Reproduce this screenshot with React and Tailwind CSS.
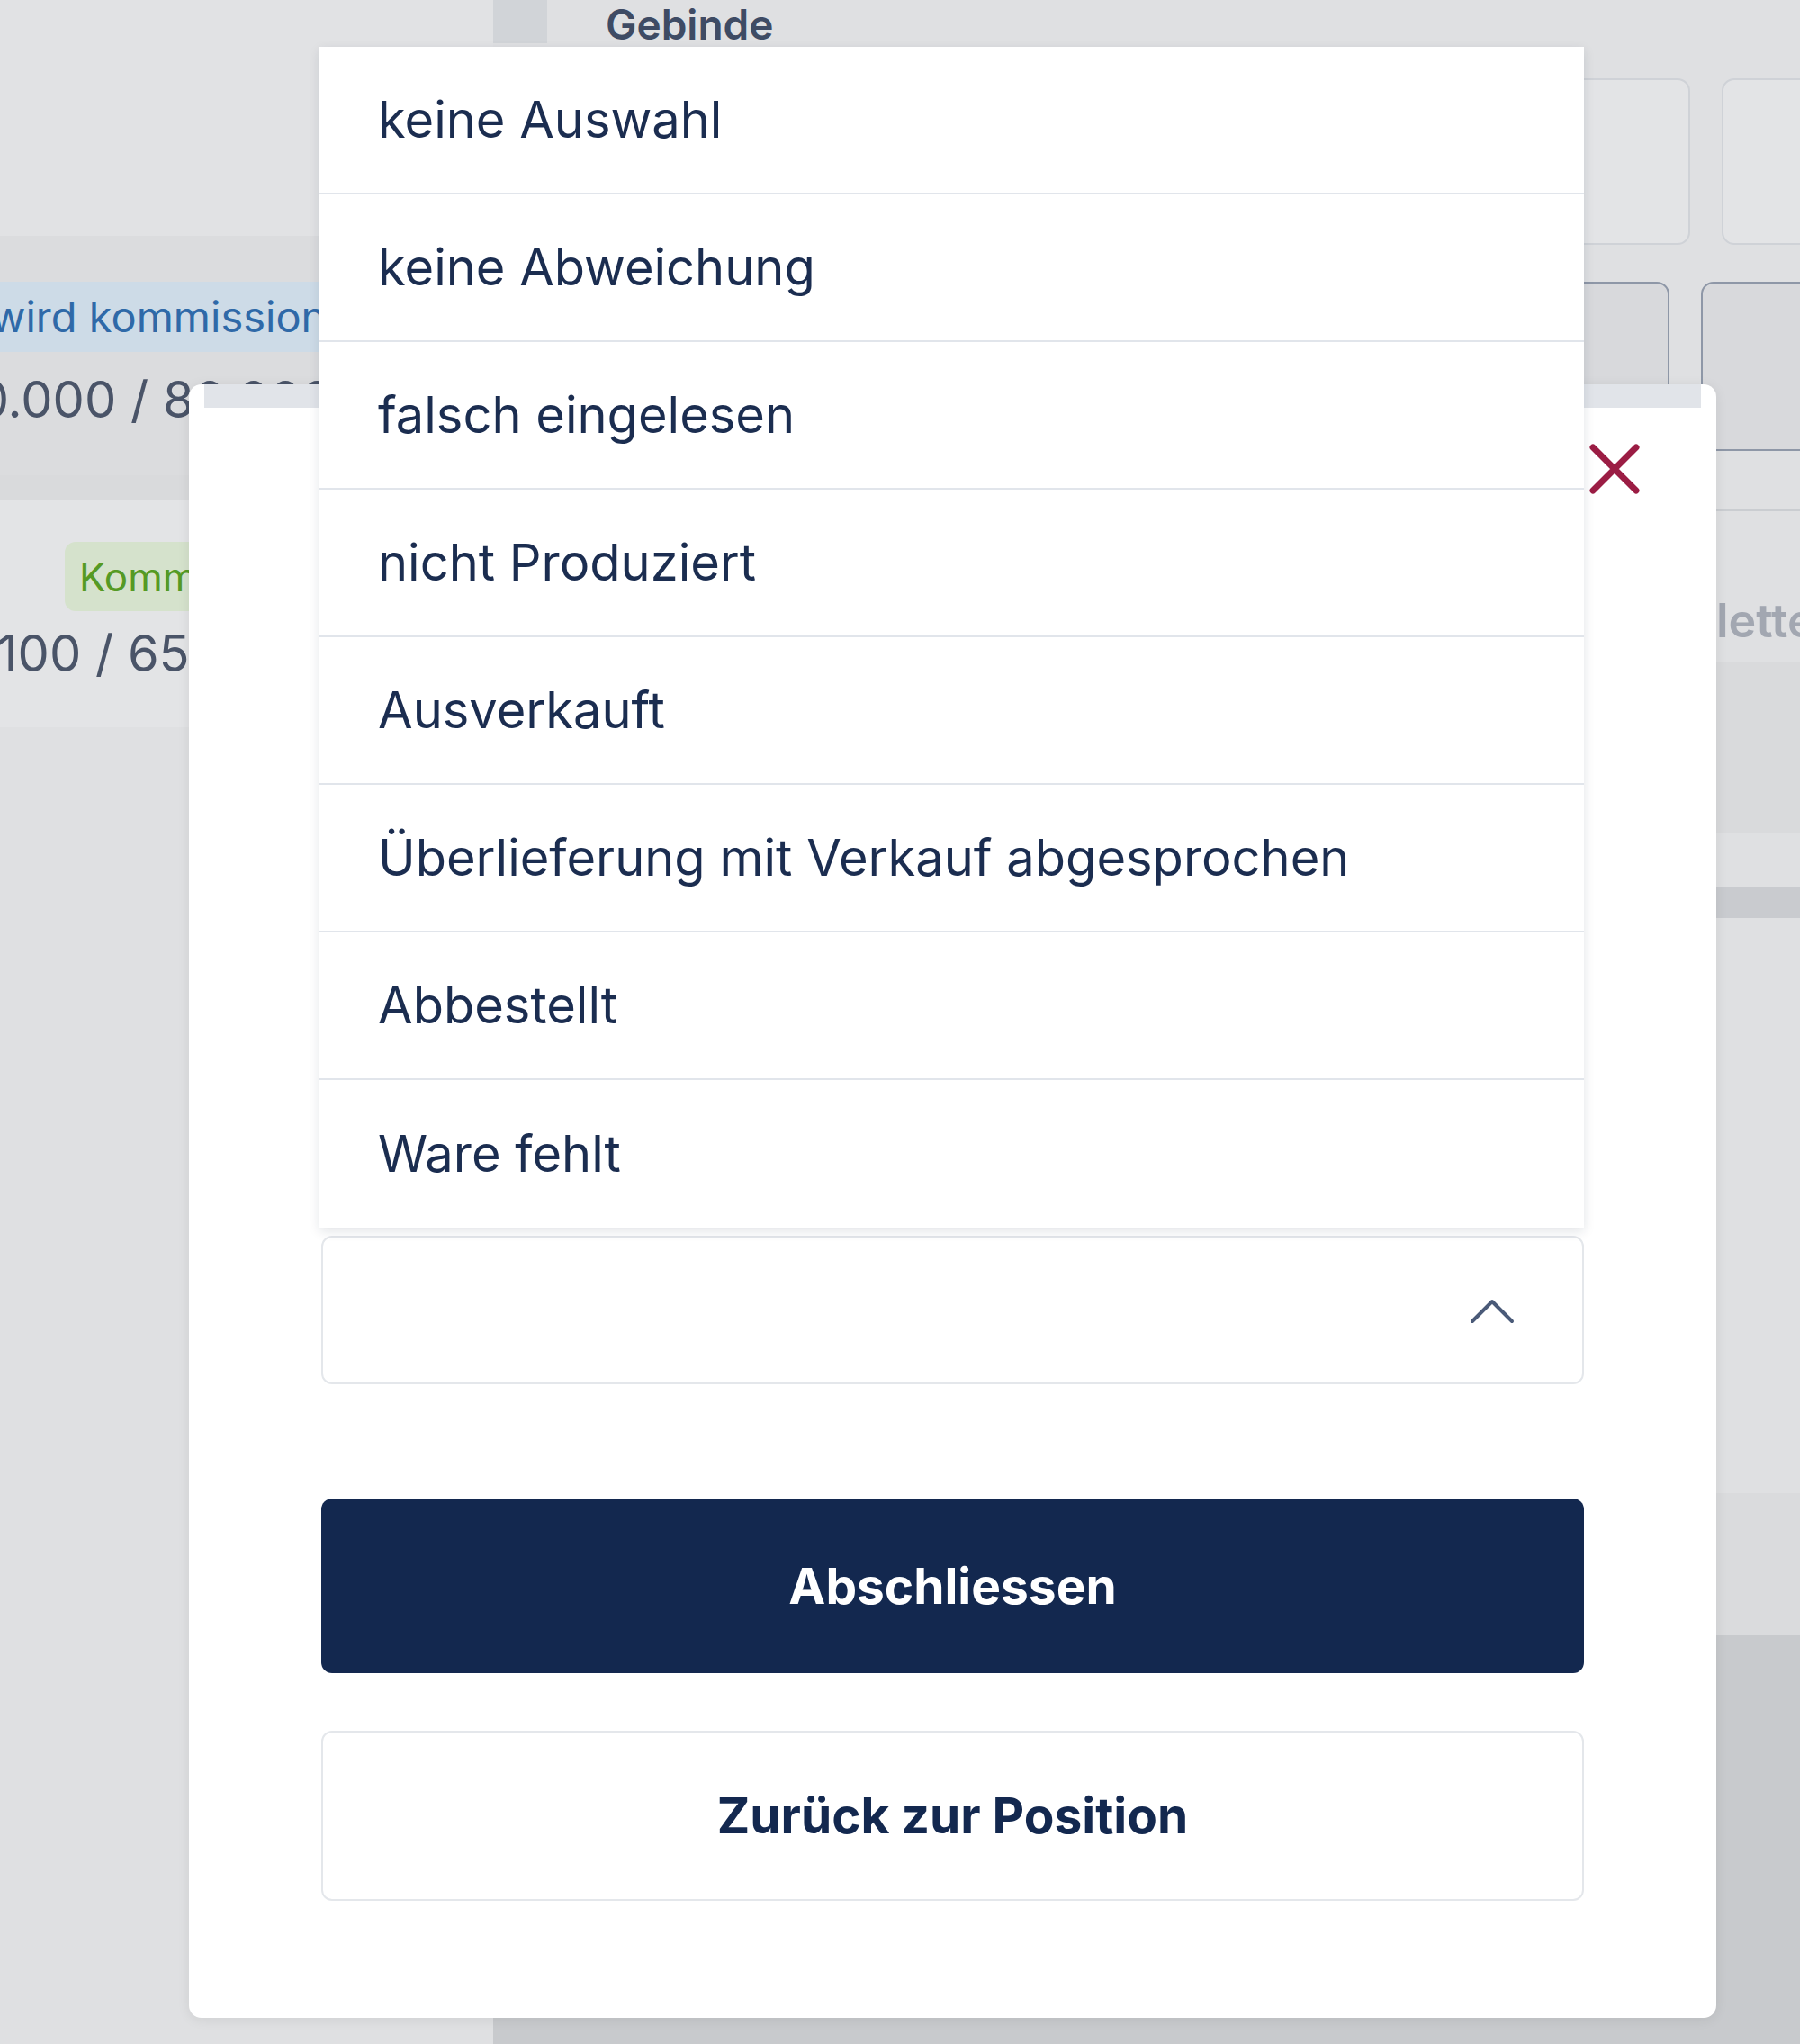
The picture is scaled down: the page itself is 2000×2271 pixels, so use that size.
import React from 'react';

const reasons = [
  'keine Auswahl',
  'keine Abweichung',
  'falsch eingelesen',
  'nicht Produziert',
  'Ausverkauft',
  'Überlieferung mit Verkauf abgesprochen',
  'Abbestellt',
  'Ware fehlt',
];

const CloseIcon = () => (
  <svg width="58" height="58" viewBox="0 0 58 58" fill="none">
    <path d="M5 5 L53 53 M53 5 L5 53" stroke="#9b1d44" strokeWidth="7" strokeLinecap="round" />
  </svg>
);

const ChevronUp = () => (
  <svg width="50" height="32" viewBox="0 0 50 32" fill="none">
    <path d="M3 28 L25 6 L47 28" stroke="#4a5a78" strokeWidth="4" strokeLinecap="round" strokeLinejoin="round" />
  </svg>
);

const App = () => {
  return (
    <div className="relative w-[2000px] h-[2271px] overflow-hidden bg-[#dfe0e2] font-['Inter',sans-serif]">
      {/* Page behind the dialog */}
      <div className="flex h-full">
        {/* Left list */}
        <div className="w-[548px] shrink-0 flex flex-col overflow-hidden">
          <div className="h-[262px] bg-[#e1e2e4]" />
          <div className="h-[266px] bg-[#dbdcde] pt-[51px]">
            <div className="h-[78px] w-[600px] -ml-[10px] bg-[#cddbe7] flex items-center text-[47px] text-[#2f69a8] whitespace-nowrap">
              wird kommissioniert
            </div>
            <div className="-ml-[60px] mt-[18px] text-[56px] leading-[70px] text-[#4a5468] whitespace-nowrap">
              80.000 / 80.000
            </div>
          </div>
          <div className="h-[27px] bg-[#d9dadc]" />
          <div className="h-[253px] bg-[#e3e4e6] pt-[47px]">
            <div className="ml-[72px] h-[77px] w-[400px] rounded-[12px] bg-[#d5e2cc] flex items-center pl-[16px] text-[44px] text-[#559a24] whitespace-nowrap">
              Kommissioniert
            </div>
            <div className="-ml-[26px] mt-[12px] text-[56px] leading-[70px] text-[#4a5468] whitespace-nowrap">
              1100 / 650
            </div>
          </div>
          <div className="flex-1 bg-[#dfe0e2]" />
        </div>

        {/* Middle + right */}
        <div className="flex-1 flex flex-col">
          <div className="h-[1817px] flex">
            <div className="w-[1212px] shrink-0">
              <div className="flex items-start">
                <div className="w-[60px] h-[48px] bg-[#d1d4d8]" />
                <div className="ml-[65px] text-[46px] leading-[54px] font-semibold text-[#3e4b64]">Gebinde</div>
              </div>
            </div>
            <div className="flex-1 overflow-hidden flex flex-col">
              <div className="pt-[87px] flex gap-[35px] -ml-[20px]">
                <div className="w-[138px] h-[185px] shrink-0 rounded-[14px] border-2 border-[#cfd2d7] bg-[#e3e4e6]" />
                <div className="w-[140px] h-[185px] shrink-0 rounded-[14px] border-2 border-[#cfd2d7] bg-[#e3e4e6]" />
              </div>
              <div className="mt-[41px] flex gap-[35px] -ml-[20px]">
                <div className="w-[115px] h-[188px] shrink-0 rounded-[14px] border-2 border-[#8e97a7] bg-[#d8d9dc]" />
                <div className="w-[160px] h-[188px] shrink-0 rounded-[14px] border-2 border-[#8e97a7] bg-[#d8d9dc]" />
              </div>
              <div className="mt-[65px] h-[2px] bg-[#cacdd1]" />
              <div className="mt-[94px] ml-[84px] text-[52px] leading-[56px] font-semibold text-[#a2a7b1] whitespace-nowrap">
                Palette
              </div>
              <div className="mt-[18px] h-[190px] bg-[#d9dadc]" />
              <div className="h-[59px]" />
              <div className="h-[35px] bg-[#c9cbcf]" />
              <div className="flex-1" />
              <div className="h-[158px] bg-[#dadbdd]" />
            </div>
          </div>
          <div className="flex-1 bg-[#c8cacd]" />
        </div>
      </div>

      {/* Dialog */}
      <div className="absolute left-[210px] top-[427px] w-[1697px] h-[1815px] rounded-[14px] bg-white shadow-[0_2px_14px_rgba(0,0,0,0.08)] flex flex-col">
        <div className="mx-[17px] h-[26px] bg-[#e1e4e9]" />
        <div className="flex justify-end pr-[84px] mt-[39px]">
          <button className="w-[58px] h-[58px]">
            <CloseIcon />
          </button>
        </div>

        <div className="px-[147px] pt-[823px] pb-[130px] flex flex-col">
          <div className="relative">
            {/* Open options list */}
            <div className="absolute left-[-2px] right-0 bottom-[calc(100%+9px)] bg-white shadow-[0_4px_12px_rgba(20,30,60,0.12)]">
              {reasons.map((reason, i) => (
                <div
                  key={reason}
                  className={
                    i < reasons.length - 1
                      ? 'h-[164px] flex items-center pl-[65px] border-b-2 border-[#e1e5eb] text-[56px] text-[#1b2d50]'
                      : 'h-[164px] flex items-center pl-[65px] text-[56px] text-[#1b2d50]'
                  }
                >
                  {reason}
                </div>
              ))}
            </div>
            <div className="h-[165px] rounded-[12px] border-2 border-[#e4e7eb] flex items-center justify-end pr-[75px]">
              <ChevronUp />
            </div>
          </div>

          <button className="mt-[127px] h-[194px] rounded-[12px] bg-[#13284f] text-white text-[55px] font-bold">
            Abschliessen
          </button>
          <button className="mt-[64px] h-[189px] rounded-[12px] border-2 border-[#e4e7eb] bg-white text-[#13284f] text-[55px] font-bold">
            Zurück zur Position
          </button>
        </div>
      </div>
    </div>
  );
};

export default App;
